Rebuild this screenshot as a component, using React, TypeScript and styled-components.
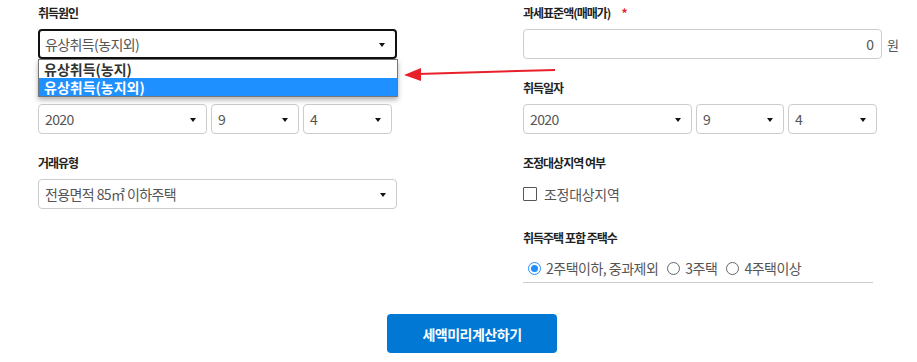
import * as React from 'react'
import styled, { createGlobalStyle } from 'styled-components'

const GlobalStyle = createGlobalStyle`
  body {
    margin: 0;
    background: #fff;
    font-family: "Noto Sans CJK KR", "Noto Sans", sans-serif;
  }
`

const Page = styled.div`
  position: relative;
  width: 868px;
  padding: 5px 11px 0 38px;
`

const Columns = styled.div`
  display: grid;
  grid-template-columns: 485px 1fr;
`

const Column = styled.div`
  display: flex;
  flex-direction: column;
`

const Field = styled.div`
  position: relative;
  margin-bottom: 21px;
`

const Label = styled.div`
  height: 16px;
  margin-bottom: 8px;
  font-size: 12px;
  line-height: 16px;
  font-weight: 700;
  letter-spacing: -1px;
  color: #222;
`

const Required = styled.span`
  margin-left: 11px;
  color: #e8202a;
  font-size: 12px;
`

const Select = styled.div<{ $width?: number; $focused?: boolean }>`
  position: relative;
  box-sizing: border-box;
  width: ${(p) => p.$width ?? 359}px;
  height: 30px;
  padding: 0 24px 0 ${(p) => (p.$focused ? 5 : 6)}px;
  display: flex;
  align-items: center;
  border: ${(p) => (p.$focused ? '2px solid #111' : '1px solid #ccc')};
  border-radius: 4px;
  font-size: 14px;
  letter-spacing: -0.6px;
  color: #555;
  background: #fff;

  &::after {
    content: '';
    position: absolute;
    right: 10px;
    top: 50%;
    margin-top: -1px;
    border-left: 3px solid transparent;
    border-right: 3px solid transparent;
    border-top: 4px solid #111;
  }
`

const DateRow = styled.div`
  display: flex;
  gap: 4px;
`

const Dropdown = styled.div`
  position: absolute;
  top: 54px;
  left: 0;
  width: 360px;
  box-sizing: border-box;
  border: 1px solid #767676;
  background: #fff;
  box-shadow: 0 3px 5px rgba(0, 0, 0, 0.3);
  z-index: 2;
`

const Option = styled.div<{ $active?: boolean }>`
  height: 18px;
  padding-left: 5px;
  font-size: 14px;
  line-height: 18px;
  font-weight: 700;
  color: ${(p) => (p.$active ? '#fff' : '#333')};
  background: ${(p) => (p.$active ? '#1e90ff' : '#fff')};
`

const InputRow = styled.div`
  display: flex;
  align-items: center;
  gap: 5px;
`

const Input = styled.div`
  box-sizing: border-box;
  width: 359px;
  height: 30px;
  padding: 0 7px;
  display: flex;
  align-items: center;
  justify-content: flex-end;
  border: 1px solid #ccc;
  border-radius: 4px;
  font-size: 14px;
  color: #555;
`

const Unit = styled.span`
  font-size: 13px;
  color: #555;
`

const CheckRow = styled.label`
  height: 30px;
  display: flex;
  align-items: center;
  gap: 7px;
  font-size: 14px;
  letter-spacing: -0.3px;
  color: #555;
`

const CheckBox = styled.span`
  box-sizing: border-box;
  width: 14px;
  height: 14px;
  border: 1px solid #555;
  border-radius: 1px;
`

const RadioRow = styled.div`
  box-sizing: border-box;
  width: 350px;
  height: 29px;
  padding-left: 5px;
  display: flex;
  align-items: center;
  gap: 9px;
  border-bottom: 1px solid #ccc;
  font-size: 14px;
  letter-spacing: -0.5px;
  color: #555;
`

const RadioItem = styled.label`
  display: flex;
  align-items: center;
  gap: 5px;
`

const RadioCircle = styled.span<{ $checked?: boolean }>`
  box-sizing: border-box;
  width: 13px;
  height: 13px;
  border-radius: 50%;
  border: 1px solid ${(p) => (p.$checked ? '#1e90ff' : '#666')};
  display: flex;
  align-items: center;
  justify-content: center;

  &::after {
    content: '';
    width: 7px;
    height: 7px;
    border-radius: 50%;
    background: ${(p) => (p.$checked ? '#1e90ff' : 'transparent')};
  }
`

const ButtonRow = styled.div`
  display: flex;
  justify-content: center;
  margin-top: 10px;
`

const SubmitButton = styled.button`
  width: 170px;
  height: 39px;
  border: none;
  border-radius: 4px;
  background: #0078d4;
  color: #fff;
  font-family: inherit;
  font-size: 14px;
  font-weight: 700;
  letter-spacing: -0.5px;
`

const Arrow = styled.svg`
  position: absolute;
  left: 400px;
  top: 60px;
`

function DateSelects() {
  return (
    <DateRow>
      <Select $width={169}>2020</Select>
      <Select $width={88}>9</Select>
      <Select $width={89}>4</Select>
    </DateRow>
  )
}

export default function App() {
  return (
    <Page>
      <GlobalStyle />
      <Columns>
        <Column>
          <Field>
            <Label>취득원인</Label>
            <Select $focused>유상취득(농지외)</Select>
            <Dropdown>
              <Option>유상취득(농지)</Option>
              <Option $active>유상취득(농지외)</Option>
            </Dropdown>
          </Field>
          <Field>
            <Label>취득일자</Label>
            <DateSelects />
          </Field>
          <Field>
            <Label>거래유형</Label>
            <Select>전용면적 85㎡ 이하주택</Select>
          </Field>
        </Column>
        <Column>
          <Field>
            <Label>
              과세표준액(매매가)<Required>*</Required>
            </Label>
            <InputRow>
              <Input>0</Input>
              <Unit>원</Unit>
            </InputRow>
          </Field>
          <Field>
            <Label>취득일자</Label>
            <DateSelects />
          </Field>
          <Field>
            <Label>조정대상지역 여부</Label>
            <CheckRow>
              <CheckBox />
              조정대상지역
            </CheckRow>
          </Field>
          <Field>
            <Label>취득주택 포함 주택수</Label>
            <RadioRow>
              <RadioItem>
                <RadioCircle $checked />
                2주택이하, 중과제외
              </RadioItem>
              <RadioItem>
                <RadioCircle />
                3주택
              </RadioItem>
              <RadioItem>
                <RadioCircle />
                4주택이상
              </RadioItem>
            </RadioRow>
          </Field>
        </Column>
      </Columns>
      <ButtonRow>
        <SubmitButton>세액미리계산하기</SubmitButton>
      </ButtonRow>
      <Arrow width="160" height="24" viewBox="0 0 160 24">
        <line x1="155" y1="10" x2="18" y2="14" stroke="#e8202a" strokeWidth="2" />
        <polygon points="4,15 21,8 21,21" fill="#e8202a" />
      </Arrow>
    </Page>
  )
}
